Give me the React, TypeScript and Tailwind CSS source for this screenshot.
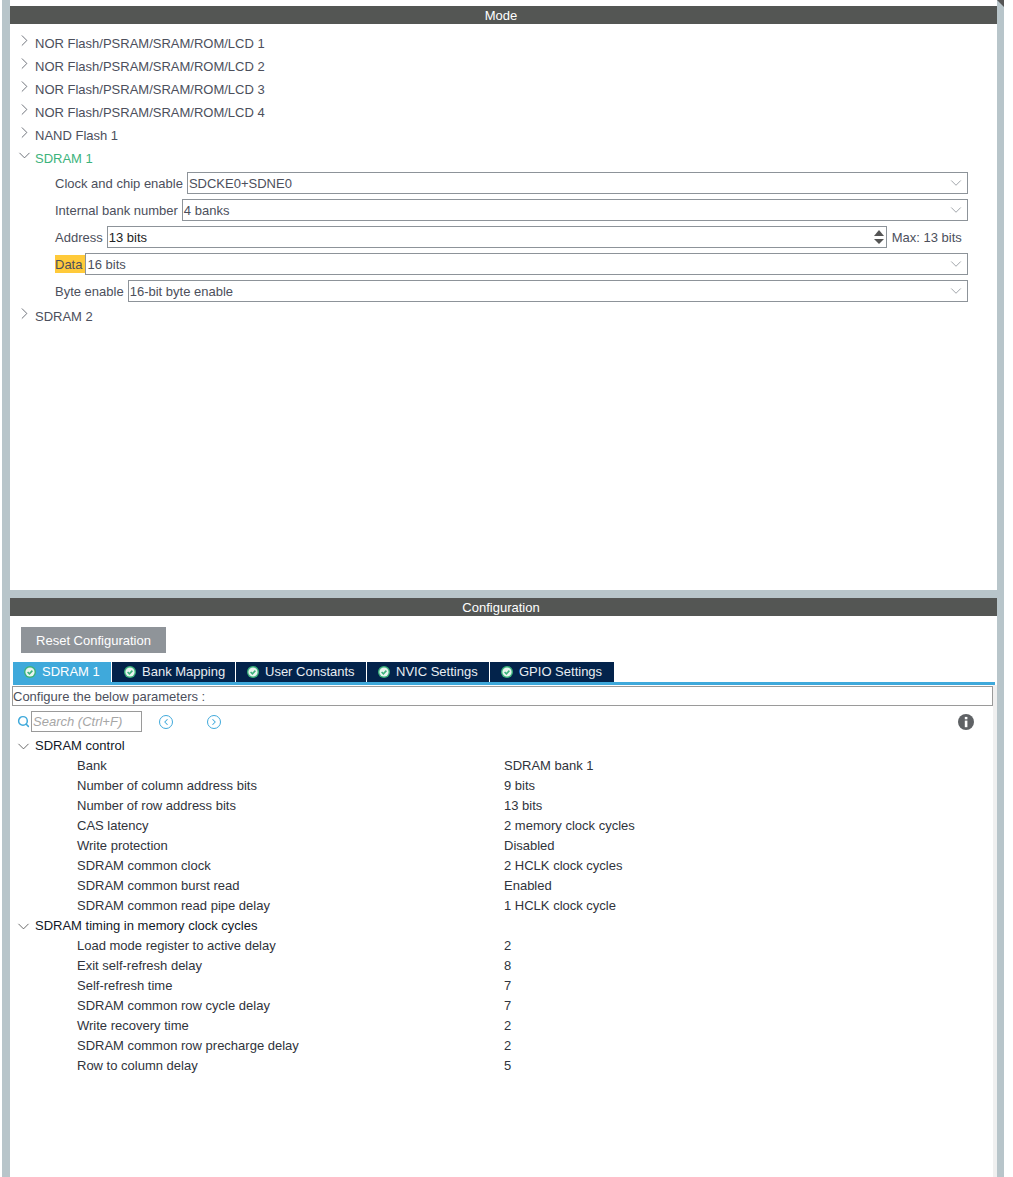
import { ChevronDown, ChevronRight, ChevronLeft, Search } from "lucide-react";

const font = "font-['Liberation_Sans',Arial,sans-serif]";

const peripherals = [
  "NOR Flash/PSRAM/SRAM/ROM/LCD 1",
  "NOR Flash/PSRAM/SRAM/ROM/LCD 2",
  "NOR Flash/PSRAM/SRAM/ROM/LCD 3",
  "NOR Flash/PSRAM/SRAM/ROM/LCD 4",
  "NAND Flash 1",
];

const tabs = [
  { name: "SDRAM 1", width: "w-[98px] pl-[11px]", active: true },
  { name: "Bank Mapping", width: "w-[123px] pl-[12px]", active: false },
  { name: "User Constants", width: "w-[130px] pl-[11px]", active: false },
  { name: "NVIC Settings", width: "w-[122px] pl-[11px]", active: false },
  { name: "GPIO Settings", width: "w-[124px] pl-[11px]", active: false },
];

const controlRows = [
  ["Bank", "SDRAM bank 1"],
  ["Number of column address bits", "9 bits"],
  ["Number of row address bits", "13 bits"],
  ["CAS latency", "2 memory clock cycles"],
  ["Write protection", "Disabled"],
  ["SDRAM common clock", "2 HCLK clock cycles"],
  ["SDRAM common burst read", "Enabled"],
  ["SDRAM common read pipe delay", "1 HCLK clock cycle"],
];

const timingRows = [
  ["Load mode register to active delay", "2"],
  ["Exit self-refresh delay", "8"],
  ["Self-refresh time", "7"],
  ["SDRAM common row cycle delay", "7"],
  ["Write recovery time", "2"],
  ["SDRAM common row precharge delay", "2"],
  ["Row to column delay", "5"],
];

function PanelHeader({ title }: { title: string }) {
  return (
    <div className="h-[18px] bg-[#545654] text-white text-[13px] leading-[19px] text-center pr-[5px]">
      {title}
    </div>
  );
}

function TreeItem({ label, open, green }: { label: string; open?: boolean; green?: boolean }) {
  return (
    <div className="h-[23px] flex items-center pl-[3px]">
      <span className="w-[22px] flex justify-center -mt-[6px]">
        {open ? (
          <ChevronDown size={19} strokeWidth={1.1} className="text-[#5a5f68]" />
        ) : (
          <ChevronRight size={19} strokeWidth={1.1} className="text-[#5a5f68]" />
        )}
      </span>
      <span className={`text-[13px] ${green ? "text-[#3cb37c]" : "text-[#4c4f5c]"}`}>
        {label}
      </span>
    </div>
  );
}

function FieldRow({ label, value, highlight }: { label: string; value: string; highlight?: boolean }) {
  return (
    <div className="h-[22px] flex items-center mb-[5px] pl-[45px] pr-[29px]">
      <span
        className={`text-[13px] text-[#4c4f5c] h-[18px] leading-[20px] ${
          highlight ? "bg-[#ffca3a] pr-[3px]" : "mr-[4px]"
        }`}
      >
        {label}
      </span>
      <div className="flex-1 h-[22px] border border-[#8d9399] flex items-center justify-between pl-[1px] pr-[2px] bg-white">
        <span className="text-[13px] text-[#4c4f5c] pt-[1px]">{value}</span>
        <ChevronDown size={18} strokeWidth={1.1} className="text-[#8d9399]" />
      </div>
    </div>
  );
}

function AddressRow() {
  return (
    <div className="h-[22px] flex items-center mb-[5px] pl-[45px] pr-[33px]">
      <span className="text-[13px] text-[#4c4f5c] mr-[4px] pt-[1px]">Address</span>
      <div className="w-[780px] h-[22px] border border-[#8d9399] flex items-center justify-between pl-[1px] pr-[2px]">
        <span className="text-[13px] text-[#222] pt-[1px]">13 bits</span>
        <span className="flex flex-col gap-[3px]">
          <span className="w-0 h-0 border-x-[5px] border-x-transparent border-b-[6px] border-b-[#555]" />
          <span className="w-0 h-0 border-x-[5px] border-x-transparent border-t-[5px] border-t-[#555]" />
        </span>
      </div>
      <span className="ml-[5px] text-[13px] text-[#4c4f5c] pt-[1px]">Max: 13 bits</span>
    </div>
  );
}

function CheckBadge() {
  return (
    <svg width="12" height="12" viewBox="0 0 12 12" className="shrink-0">
      <circle cx="6" cy="6" r="6" fill="#3cb37c" />
      <circle cx="6" cy="6" r="4.6" fill="#e9f5ef" />
      <path d="M3.6 6 L5.4 7.8 L8.4 4.6" fill="none" stroke="#3cb37c" strokeWidth="1.6" />
    </svg>
  );
}

function ParamGroup({ title, rows }: { title: string; rows: string[][] }) {
  return (
    <div>
      <div className="h-5 flex items-center pl-[4px]">
        <ChevronDown size={19} strokeWidth={1.1} className="text-[#555] mr-[2px]" />
        <span className="text-[13px] text-[#111827]">{title}</span>
      </div>
      {rows.map(([name, value]) => (
        <div key={name} className="h-5 flex items-center text-[13px] text-[#30343c]">
          <span className="w-[494px] pl-[67px]">{name}</span>
          <span>{value}</span>
        </div>
      ))}
    </div>
  );
}

export default function App() {
  return (
    <div className={`${font} w-[1013px] h-[1177px] bg-white flex overflow-hidden`}>
      <div className="w-[2px] shrink-0" />
      <div className="w-[8px] shrink-0 bg-[#b8c5ca]" />

      <div className="w-[987px] shrink-0 flex flex-col bg-[#b8c5ca]">
        {/* Mode */}
        <section className="h-[590px] shrink-0 bg-white pt-[6px]">
          <PanelHeader title="Mode" />
          <div className="pt-[8px]">
            {peripherals.map((p) => (
              <TreeItem key={p} label={p} />
            ))}
            <TreeItem label="SDRAM 1" open green />
            <div className="pt-[2px]">
              <FieldRow label="Clock and chip enable" value="SDCKE0+SDNE0" />
              <FieldRow label="Internal bank number" value="4 banks" />
              <AddressRow />
              <FieldRow label="Data" value="16 bits" highlight />
              <FieldRow label="Byte enable" value="16-bit byte enable" />
            </div>
            <div className="-mt-[2px]">
              <TreeItem label="SDRAM 2" />
            </div>
          </div>
        </section>

        <div className="h-[8px] shrink-0" />

        {/* Configuration */}
        <section className="flex-1 min-h-0 bg-white">
          <PanelHeader title="Configuration" />
          <div className="pt-[11px] pl-[11px]">
            <button className="block w-[145px] h-[26px] bg-[#8f9499] text-white text-[13px] text-center pt-[1px]">
              Reset Configuration
            </button>
          </div>

          <div className="mt-[9px] ml-[3px] mr-[2px] border-b-[3px] border-[#3fa9db] flex">
            {tabs.map((t) => (
              <div
                key={t.name}
                className={`${t.width} h-[20px] mr-[1px] flex items-center gap-[6px] text-[13px] ${
                  t.active ? "bg-[#3fa9db] text-white" : "bg-[#03234b] text-[#e8edf2]"
                }`}
              >
                <CheckBadge />
                <span>{t.name}</span>
              </div>
            ))}
          </div>

          <div className="flex h-[500px]">
            <div className="w-[983px] shrink-0">
              <div className="ml-[2px] mt-[1px] h-[20px] border border-[#9a9a9a] text-[13px] leading-[20px] text-[#4c4f5c]">
                Configure the below parameters :
              </div>

              <div className="h-[21px] mt-[5px] flex items-center">
                <Search size={13} strokeWidth={2.75} className="text-[#3fa9db] ml-[7px]" />
                <div className="ml-[1px] w-[111px] h-[21px] border border-[#9a9a9a] text-[13px] leading-[19px] italic text-[#a6a6a6] pl-[1px]">
                  Search (Ctrl+F)
                </div>
                <span className="ml-[17px] w-[14px] h-[14px] rounded-full border-[1.5px] border-[#3fa9db] flex items-center justify-center">
                  <ChevronLeft size={10} strokeWidth={2.5} className="text-[#3fa9db]" />
                </span>
                <span className="ml-[34px] w-[14px] h-[14px] rounded-full border-[1.5px] border-[#3fa9db] flex items-center justify-center">
                  <ChevronRight size={10} strokeWidth={2.5} className="text-[#3fa9db]" />
                </span>
                <svg width="16" height="16" viewBox="0 0 16 16" className="ml-auto mr-[19px]">
                  <circle cx="8" cy="8" r="8" fill="#5f6265" />
                  <rect x="6.8" y="6.6" width="2.6" height="6.6" fill="#fff" />
                  <rect x="6.8" y="2.9" width="2.6" height="2.4" fill="#fff" />
                </svg>
              </div>

              <div className="mt-[4px]">
                <ParamGroup title="SDRAM control" rows={controlRows} />
                <ParamGroup title="SDRAM timing in memory clock cycles" rows={timingRows} />
              </div>
            </div>
            <div className="flex-1 bg-[#f0f0f0]" />
          </div>
        </section>
      </div>

      <div className="w-[7px] shrink-0 bg-[#b8c5ca] relative">
        <span className="absolute top-0 left-0 w-0 h-0 border-t-[7px] border-t-[#555] border-l-[7px] border-l-transparent" />
      </div>
    </div>
  );
}
